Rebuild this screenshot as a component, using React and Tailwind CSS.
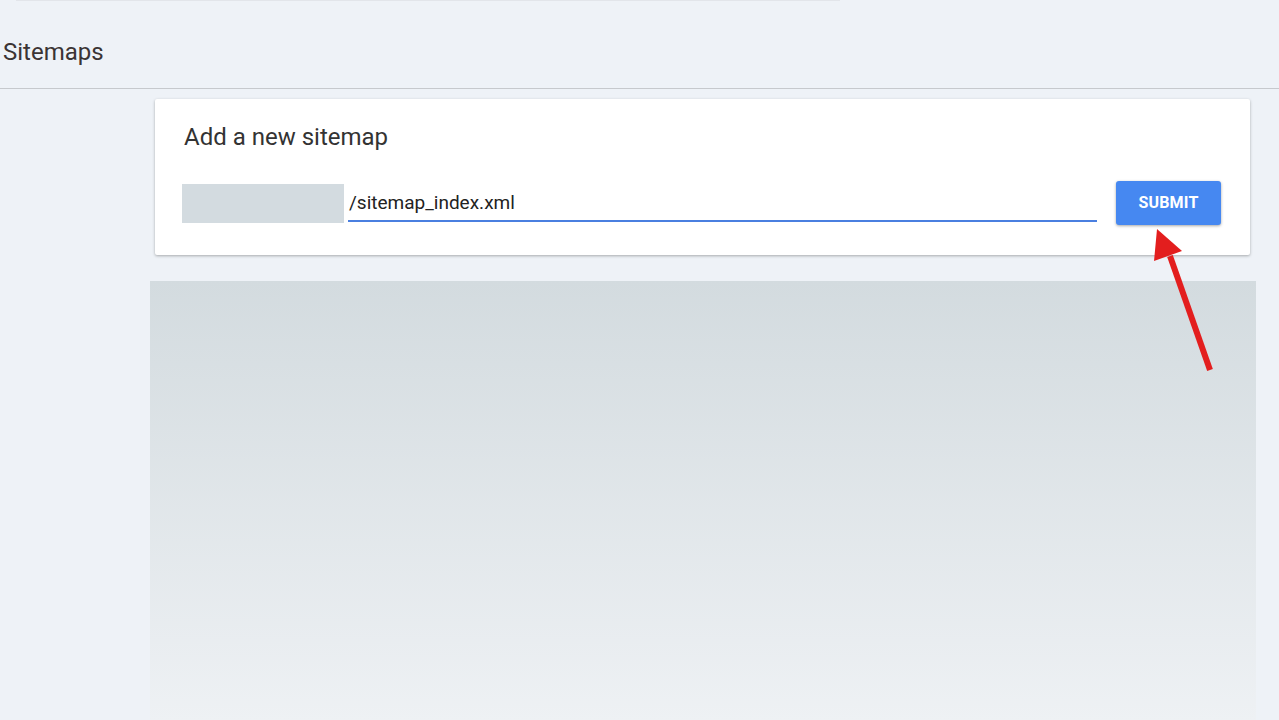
import React from "react";

export default function App() {
  return (
    <div
      className="relative w-[1279px] h-[720px] overflow-hidden bg-[#eef2f7]"
      style={{ fontFamily: "Roboto, 'Liberation Sans', sans-serif" }}
    >
      <div className="h-[1px] ml-[16px] w-[824px] bg-[#e2e5ea]" />
      <div className="h-[88px] flex items-center pl-[3px] border-b border-[#c6c9cd]">
        <h1 className="text-[24px] leading-[28px] text-[#3b3434] mt-[14px]">Sitemaps</h1>
      </div>
      <div className="flex flex-col">
        <div className="ml-[155px] mt-[10px] w-[1095px] bg-white rounded-[2px] shadow-[0_1px_3px_rgba(0,0,0,0.3)] pl-[29px] pr-[29px] pt-[23px] pb-[30px]">
          <h2 className="text-[24px] leading-[30px] text-[#333] font-normal">Add a new sitemap</h2>
          <div className="mt-[29px] flex items-center -ml-[2px]">
            <div className="w-[162px] h-[39px] bg-[#d3dbe0]" />
            <div className="ml-[4px] w-[749px] h-[38px] border-b-2 border-[#4a7fe0] flex items-center pl-[1px] pt-[3px]">
              <span className="text-[19px] text-[#222]">/sitemap_index.xml</span>
            </div>
            <button className="ml-[19px] w-[105px] h-[44px] bg-[#4688f1] rounded-[3px] text-white font-bold text-[16px] tracking-[0.2px] shadow-[0_1px_3px_rgba(0,0,0,0.35)]">
              SUBMIT
            </button>
          </div>
        </div>
        <div className="ml-[150px] mt-[26px] w-[1106px] h-[440px] bg-gradient-to-b from-[#d3dbdf] to-[#eef1f4]" />
      </div>
      <svg className="absolute left-0 top-0 pointer-events-none" width="1279" height="720">
        <line x1="1210" y1="370" x2="1170" y2="256" stroke="#e31e1e" strokeWidth="6" />
        <polygon points="1157,229 1154,261 1182,251" fill="#e31e1e" />
      </svg>
    </div>
  );
}
